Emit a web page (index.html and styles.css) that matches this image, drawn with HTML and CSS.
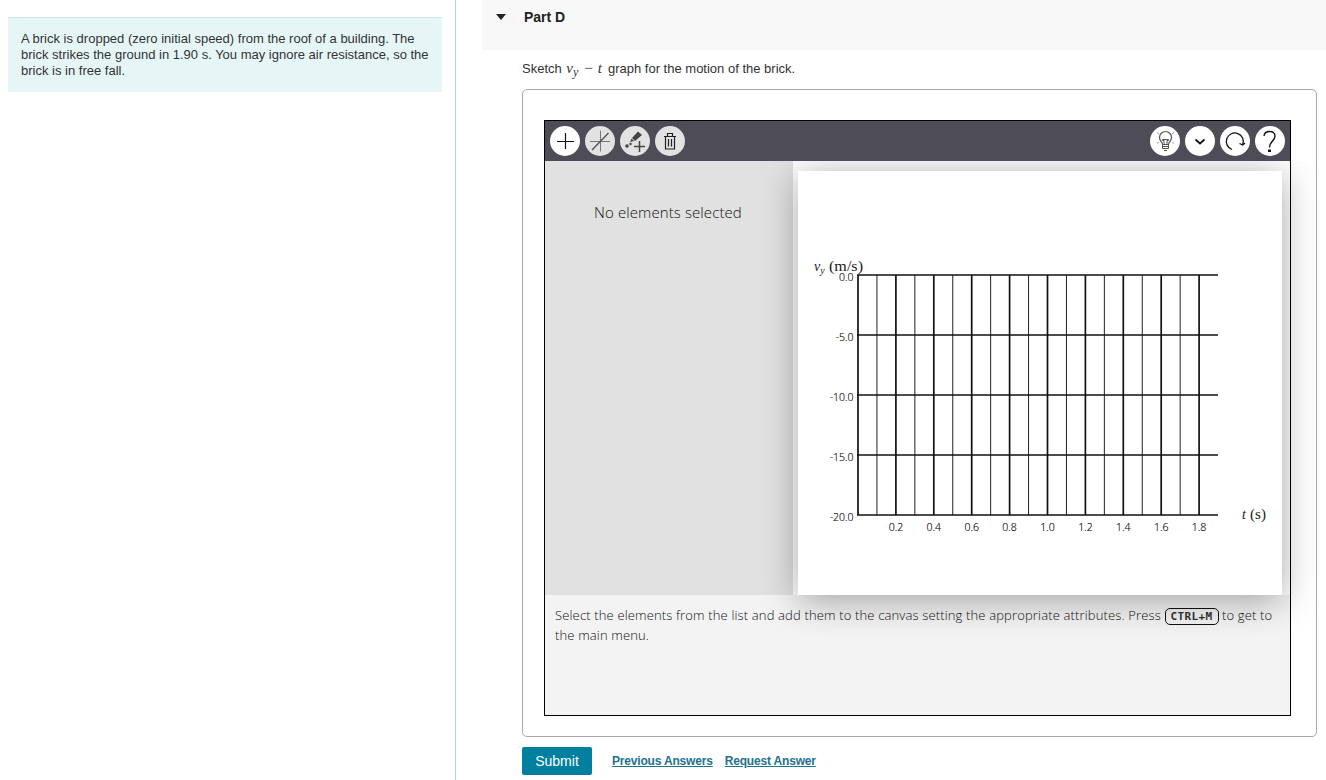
FILE: index.html
```html
<!DOCTYPE html>
<html lang="en">

<head>
    <meta charset="UTF-8">
    <meta name="viewport" content="width=device-width, initial-scale=1.0">
    <title>Part D</title>
    <link rel="stylesheet" href="styles.css">
</head>

<body>
    <div class="page">
        <aside class="problem">
            <p class="problem-text">A brick is dropped (zero initial speed) from the roof of a building. The brick strikes the ground in 1.90 s. You may ignore air resistance, so the brick is in free fall.</p>
        </aside>
        <main class="part">
            <header class="part-header">
                <span class="arrow"></span>
                <h2>Part D</h2>
            </header>
            <div class="part-body">
                <p class="question">Sketch <span class="math"><i>v</i><sub>y</sub><span class="minus">−</span><i>t</i></span> graph for the motion of the brick.</p>
                <div class="answer-box">
                    <div class="grapher">
                        <div class="toolbar">
                            <button class="tool" aria-label="Add">
                                <svg viewBox="0 0 30 30"><path d="M15.500 7v16M7 15.500h17" stroke="#111" stroke-width="1.2" /></svg>
                            </button>
                            <button class="tool disabled" aria-label="Add line">
                                <svg viewBox="0 0 30 30"><path d="M15.500 4.500v21M5 15.500h20" stroke="#777" /><path d="M7 24L23.500 7" stroke="#555" stroke-width="1.4" /></svg>
                            </button>
                            <button class="tool disabled" aria-label="Add point">
                                <svg viewBox="0 0 30 30">
                                    <path d="M12 12L18 5.500l4 3.500-7 6z" fill="#444" />
                                    <path d="M11.500 12.500l-1.500 3.500 4-1z" fill="#444" />
                                    <circle cx="7" cy="20" r="1.800" fill="#444" />
                                    <circle cx="10.500" cy="18" r="1.200" fill="#444" />
                                    <path d="M19.500 15v11M14 20.500h11" stroke="#444" stroke-width="1.500" />
                                </svg>
                            </button>
                            <button class="tool disabled" aria-label="Delete">
                                <svg viewBox="0 0 30 30"><path d="M9 10.500h12M10.500 10.500v12.500h9v-12.500M12.500 10V7.500h5V10M13.500 13v7.500M16.500 13v7.500" stroke="#222" stroke-width="1.200" /></svg>
                            </button>
                            <span class="spacer"></span>
                            <button class="tool" aria-label="Hints">
                                <svg viewBox="0 0 30 30">
                                    <path d="M12.500 18.500c0-2.500-3-3.500-3-7a6 6 0 0 1 12 0c0 3.500-3 4.500-3 7z" stroke="#555" stroke-width="1.200" />
                                    <path d="M12.500 18.500h6v4h-6zM12.500 20.500h6M14 24.500h3M14 18v-3.500h-1.500v-1h6v1H17V18" stroke="#555" />
                                    <path d="M7 6.500l2 1.500M24 6.500l-2 1.500M7 17.500l2-1.500M24 17.500l-2-1.500" stroke="#999" />
                                </svg>
                            </button>
                            <button class="tool" aria-label="More">
                                <svg viewBox="0 0 30 30"><path d="M10.500 13.500L15 17.500l4.500-4" stroke="#111" stroke-width="1.700" /></svg>
                            </button>
                            <button class="tool" aria-label="Reset">
                                <svg viewBox="0 0 30 30"><path d="M12 23.500A8.500 8.500 0 1 1 22.800 18.500M19.500 17.500l3.300 1.500 2.200-2" stroke="#111" stroke-width="1.300" /></svg>
                            </button>
                            <button class="tool" aria-label="Help">
                                <svg viewBox="0 0 30 30"><path d="M9 10C9.500 4 20 4 20 10c0 5-5.500 5-5.500 11.500" stroke="#111" stroke-width="1.400" /><path d="M13 23.500h3v2.500h-3z" fill="#111" /></svg>
                            </button>
                        </div>
                        <div class="workspace">
                            <div class="sidebar">No elements selected</div>
                            <div class="canvas-wrap">
                                <svg class="canvas" id="graph" viewBox="0 0 484 424" width="484" height="424">
                                    <g class="math-label">
                                        <text x="16" y="100"><tspan font-style="italic">v</tspan><tspan font-style="italic" font-size="10" dy="2.5">y</tspan></text>
                                        <text x="31" y="100" textLength="34" lengthAdjust="spacingAndGlyphs">(m/s)</text>
                                        <text x="444" y="348" font-style="italic">t</text>
                                        <text x="452" y="348" textLength="16" lengthAdjust="spacingAndGlyphs">(s)</text>
                                    </g>
                                </svg>
                            </div>
                        </div>
                        <div class="help-text">Select the elements from the list and add them to the canvas setting the appropriate attributes. Press <kbd>CTRL+M</kbd> to get to<br>the main menu.</div>
                    </div>
                </div>
                <div class="actions">
                    <button class="submit">Submit</button>
                    <a href="#">Previous Answers</a>
                    <a href="#">Request Answer</a>
                </div>
            </div>
        </main>
    </div>
    <script>
        const graph = document.getElementById('graph');
        const left = 60;
        const top0 = 104;
        const stepX = 18.95;
        const stepY = 60;

        function addShape(name, attrs, text) {
            const el = document.createElementNS('http://www.w3.org/2000/svg', name);
            for (const key in attrs) {
                el.setAttribute(key, attrs[key]);
            }
            if (text) {
                el.textContent = text;
            }
            graph.appendChild(el);
        }

        for (let i = 0; i <= 18; i++) {
            const x = left + i * stepX;
            const major = i % 2 === 0;
            addShape('line', { x1: x, x2: x, y1: top0, y2: top0 + 240, class: major ? 'major' : 'minor' });
            if (major && i > 0) {
                addShape('text', { x: x, y: 360, class: 'tick', 'text-anchor': 'middle' }, (i / 10).toFixed(1));
            }
        }

        for (let i = 0; i <= 4; i++) {
            const y = top0 + i * stepY;
            addShape('line', { x1: left - 1, x2: 420, y1: y, y2: y, class: 'major' });
            addShape('text', { x: 55.5, y: y + 6, class: 'tick', 'text-anchor': 'end' }, (i ? '-' : '') + (i * 5).toFixed(1));
        }
    </script>
</body>

</html>
```
FILE: styles.css
```css
* {
    box-sizing: border-box;
}

body {
    margin: 0;
    font-family: "Liberation Sans", Arial, sans-serif;
    font-size: 13px;
    color: #333;
    background-color: #fff;
}

.page {
    display: flex;
    height: 780px;
    overflow: hidden;
}

.problem {
    width: 456px;
    flex-shrink: 0;
    padding: 17px 13px 0 8px;
    border-right: 1px solid #b5cbd8;
}

.problem-text {
    margin: 0;
    height: 75px;
    padding: 13px 10px 0 13px;
    background-color: #e6f6f7;
    border-top: 1px solid #cfe3e8;
    line-height: 16px;
}

.part {
    width: 844px;
    margin-left: 26px;
}

.part-header {
    display: flex;
    height: 50px;
    padding: 9px 0 0 14px;
    background-color: #f8f8f8;
}

.arrow {
    width: 0;
    height: 0;
    margin: 5px 18px 0 0;
    border-left: 5px solid transparent;
    border-right: 5px solid transparent;
    border-top: 6px solid #222;
}

h2 {
    margin: 0;
    font-size: 14px;
    line-height: 16px;
    color: #222;
}

.part-body {
    padding: 0 9px 0 40px;
}

.question {
    margin: 0;
    height: 39px;
    padding-top: 10px;
    line-height: 16px;
}

.math {
    display: inline-block;
    width: 38px;
    height: 16px;
    margin-left: 1px;
    font-family: "Liberation Serif", serif;
    font-size: 15px;
    line-height: 16px;
    white-space: nowrap;
}

.math sub {
    font-size: 12px;
    font-style: italic;
    line-height: 0;
    vertical-align: -3px;
}

.math .minus {
    margin: 0 5px 0 6px;
}

.answer-box {
    height: 648px;
    padding: 30px 25px 0 21px;
    border: 1px solid #aaa;
    border-radius: 5px;
}

.grapher {
    width: 747px;
    height: 596px;
    border: 1px solid #000;
    background-color: #f3f3f3;
}

.toolbar {
    display: flex;
    gap: 5px;
    height: 40px;
    padding: 5px;
    background-color: #4d4c57;
}

.tool {
    width: 30px;
    height: 30px;
    padding: 0;
    border: none;
    border-radius: 50%;
    background-color: #fff;
    cursor: pointer;
}

.tool.disabled {
    background-color: #e2e2e2;
}

.tool svg {
    display: block;
    fill: none;
}

.spacer {
    flex: 1;
}

.workspace {
    display: flex;
    height: 434px;
}

.sidebar {
    width: 248px;
    padding-top: 41px;
    background-color: #e1e1e1;
    font-family: "Open Sans", sans-serif;
    font-weight: 300;
    font-size: 15px;
    line-height: 20px;
    letter-spacing: 0.1px;
    text-align: center;
    text-indent: -2px;
    color: #111;
}

.canvas-wrap {
    width: 497px;
    padding: 10px 8px 0 5px;
    background-color: #fff;
}

.canvas {
    display: block;
    background-color: #fff;
    box-shadow: 0 5px 35px rgba(0, 0, 0, 0.35);
    clip-path: inset(-10px -40px -40px -40px);
}

.major {
    stroke: #111;
    stroke-width: 1.7;
}

.minor {
    stroke: #222;
    stroke-width: 1;
}

.tick {
    font-family: "Open Sans", sans-serif;
    font-weight: 300;
    font-size: 10.5px;
    fill: #000;
    stroke: #000;
    stroke-width: 0.15px;
}

.math-label {
    font-family: "Liberation Serif", serif;
    font-size: 14px;
    fill: #222;
}

.help-text {
    padding: 10px 10px 0;
    font-family: "Open Sans", sans-serif;
    font-weight: 300;
    font-size: 13px;
    line-height: 20px;
    letter-spacing: 0.15px;
    white-space: nowrap;
    color: #111;
}

kbd {
    display: inline-block;
    width: 54px;
    height: 17px;
    border: 1px solid #111;
    border-radius: 5px;
    font-family: "DejaVu Sans Mono", monospace;
    font-size: 11px;
    font-weight: bold;
    line-height: 15px;
    letter-spacing: 0.4px;
    text-align: center;
    color: #333;
}

.actions {
    display: flex;
    align-items: center;
    padding-top: 10px;
}

.submit {
    width: 70px;
    height: 28px;
    margin-right: 20px;
    padding: 0;
    border: none;
    border-radius: 2px;
    background-color: #007f9f;
    color: #fff;
    font-family: "Liberation Sans", Arial, sans-serif;
    font-size: 14px;
    cursor: pointer;
}

.actions a {
    margin-right: 12px;
    color: #22728c;
    font-size: 12px;
    font-weight: bold;
    letter-spacing: -0.18px;
}
```
